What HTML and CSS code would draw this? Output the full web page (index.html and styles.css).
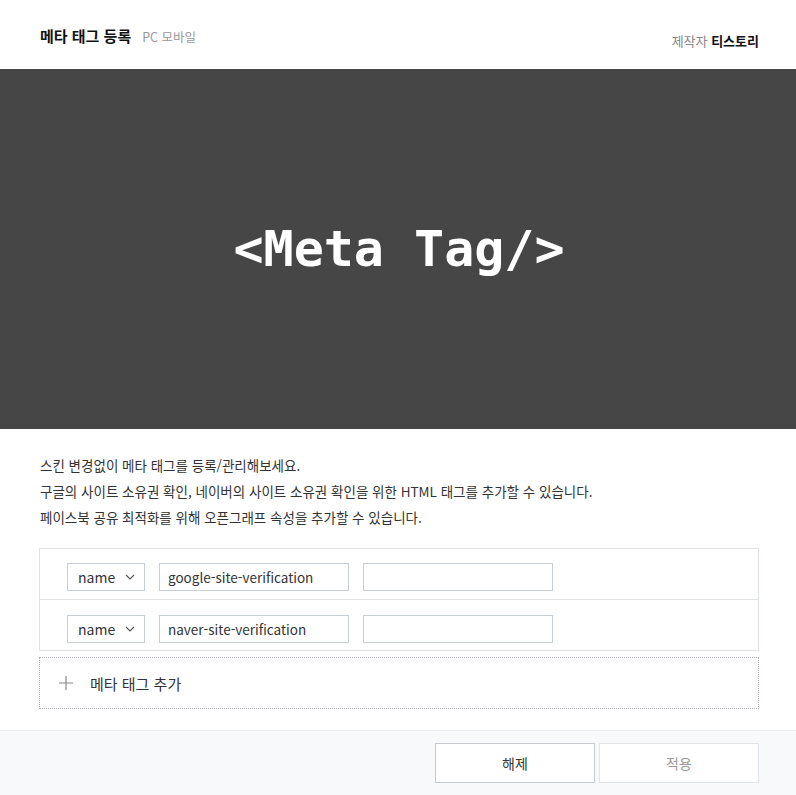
FILE: index.html
```html
<!DOCTYPE html>
<html lang="ko">
<head>
<meta charset="utf-8">
<link rel="stylesheet" href="styles.css">
</head>
<body>
<div class="page">
  <header class="top">
    <div class="title">
      <h1>메타 태그 등록</h1>
      <span class="sub">PC 모바일</span>
    </div>
    <div class="maker"><span class="label">제작자</span> <strong>티스토리</strong></div>
  </header>
  <div class="banner"><span>&lt;Meta Tag/&gt;</span></div>
  <div class="desc">
    <p>스킨 변경없이 메타 태그를 등록/관리해보세요.</p>
    <p>구글의 사이트 소유권 확인, 네이버의 사이트 소유권 확인을 위한 HTML 태그를 추가할 수 있습니다.</p>
    <p>페이스북 공유 최적화를 위해 오픈그래프 속성을 추가할 수 있습니다.</p>
  </div>
  <div class="rows">
    <div class="row">
      <div class="select">name <svg width="10" height="6" viewBox="0 0 10 6"><path d="M1 1l4 4 4-4" fill="none" stroke="#555" stroke-width="1.1"/></svg></div>
      <div class="input">google-site-verification</div>
      <div class="input"></div>
    </div>
    <div class="row">
      <div class="select">name <svg width="10" height="6" viewBox="0 0 10 6"><path d="M1 1l4 4 4-4" fill="none" stroke="#555" stroke-width="1.1"/></svg></div>
      <div class="input">naver-site-verification</div>
      <div class="input"></div>
    </div>
  </div>
  <div class="add">
    <svg width="14" height="14" viewBox="0 0 14 14"><path d="M7 0v14M0 7h14" stroke="#888" stroke-width="1.2"/></svg>
    <span>메타 태그 추가</span>
  </div>
  <footer class="foot">
    <button class="btn primary">해제</button>
    <button class="btn disabled">적용</button>
  </footer>
</div>
</body>
</html>
```
FILE: styles.css
```css
* { box-sizing: border-box; }
html, body { margin: 0; padding: 0; background: #fff; }
body { font-family: "Noto Sans CJK KR", "Noto Sans", sans-serif; color: #333; }
.page { width: 796px; height: 795px; overflow: hidden; display: flex; flex-direction: column; }
.top { height: 69px; display: flex; justify-content: space-between; align-items: flex-start; padding: 0 37px 0 40px; }
.title { display: flex; align-items: baseline; margin-top: 26px; }
.title h1 { margin: 0; font-size: 15px; font-weight: 700; color: #111; line-height: 20px; }
.title .sub { margin-left: 11px; font-size: 12.5px; color: #999; }
.maker { margin-top: 31px; font-size: 13px; line-height: 20px; }
.maker .label { color: #888; }
.maker strong { color: #111; font-weight: 700; }
.banner { height: 360px; background: #464646; display: flex; align-items: center; justify-content: center; }
.banner span { font-family: "DejaVu Sans Mono", monospace; font-weight: 700; font-size: 50px; color: #fff; margin-left: 2px; }
.desc { padding: 23px 40px 18px; }
.desc p { margin: 0; font-size: 13.5px; line-height: 26px; color: #333; }
.rows { margin: 0 37px 0 39px; border: 1px solid #dfe3e8; }
.row { height: 50px; display: flex; align-items: flex-start; padding: 14px 0 0 27px; gap: 14px; }
.row + .row { border-top: 1px solid #dfe3e8; height: 51px; padding-top: 15px; }
.select { width: 78px; height: 28px; border: 1px solid #c8ced5; font-size: 14px; color: #333; display: flex; align-items: center; justify-content: space-between; padding: 0 9px 0 10px; }
.input { width: 190px; height: 28px; border: 1px solid #c8ced5; font-size: 13.5px; color: #333; display: flex; align-items: center; padding: 0 8px; }
.add { margin: 6px 37px 0 39px; height: 52px; border: 1px dotted #a9a9b9; display: flex; align-items: center; padding-left: 19px; gap: 17px; }
.add span { font-size: 15px; color: #333; }
.foot { margin-top: 21px; flex: 1; background: #f8f9fb; border-top: 1px solid #eceef1; display: flex; justify-content: flex-end; align-items: flex-start; padding: 12px 37px 0 0; gap: 4px; }
.btn { width: 160px; height: 40px; background: #fff; font-family: inherit; font-size: 14px; padding: 0; }
.btn.primary { border: 1px solid #c6cbd2; color: #333; }
.btn.disabled { border: 1px solid #e0e3e8; color: #999; }
```
